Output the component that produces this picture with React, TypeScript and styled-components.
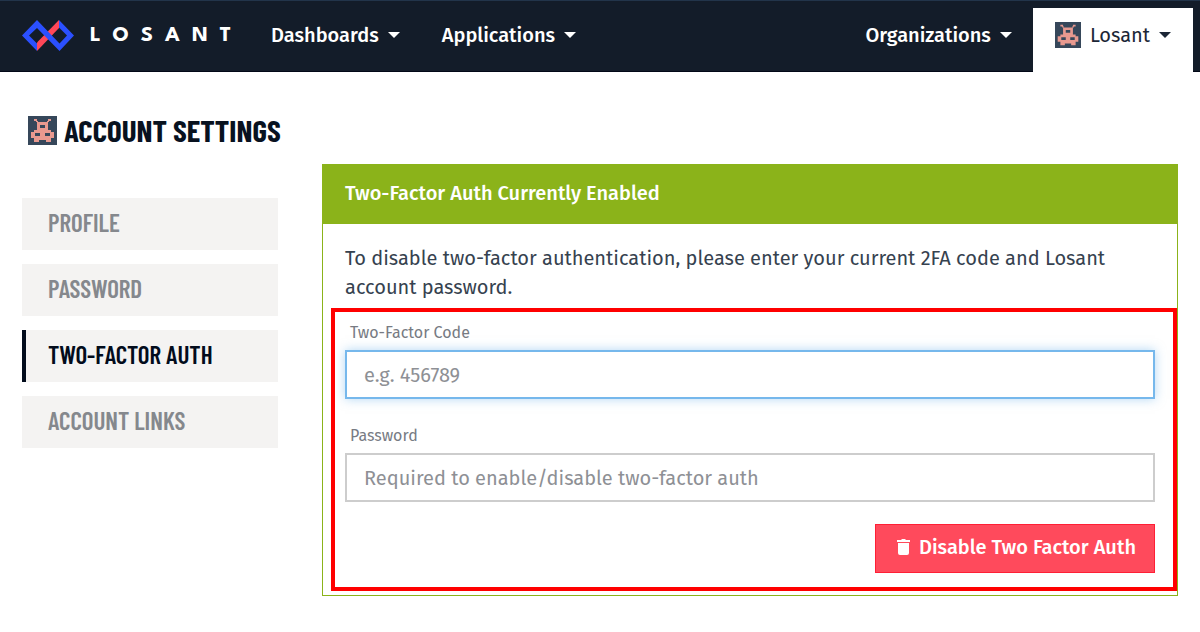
import React from "react";
import styled, { createGlobalStyle } from "styled-components";

const body = `"Fira Sans", "Noto Sans", sans-serif`;
const narrow = `"Barlow Condensed", "Roboto Condensed", "Liberation Sans", sans-serif`;

const Global = createGlobalStyle`
  * { box-sizing: border-box; }
  body { margin: 0; background: #fff; color: #36424f; font: 20px/28px ${body}; }
`;

const Header = styled.header`
  display: flex;
  align-items: stretch;
  height: 72px;
  padding: 0 7px 0 22px;
  background: #131c29;
  border-top: 1px solid #22344a;
  border-bottom: 1px solid #020817;
`;
const Brand = styled.a`
  display: flex;
  align-items: center;
  gap: 16px;
  margin-right: 28px;
  padding-bottom: 2px;
  color: #fff;
  text-decoration: none;
`;
const Wordmark = styled.span`
  padding-top: 2px;
  font: 700 22px/24px "League Spartan", Lato, sans-serif;
  letter-spacing: 12px;
`;
const Nav = styled.nav`
  display: flex;
  flex: 1;
  gap: 42px;
`;
const NavButton = styled.button<{ $end?: boolean }>`
  display: flex;
  align-items: center;
  gap: 9px;
  margin-left: ${(p) => (p.$end ? "auto" : "0")};
  padding: 0 0 2px;
  border: 0;
  background: none;
  color: #fff;
  font: 500 20px/28px ${body};
`;
const Tab = styled(NavButton)`
  margin: 7px 0 -1px 21px;
  padding: 0 22px 10px;
  background: #fff;
  color: #1b2636;
  font-weight: 400;
`;
const Caret = styled.i`
  border: 6px solid transparent;
  border-top-color: currentColor;
  border-bottom: 0;
`;

const Title = styled.h1`
  display: flex;
  align-items: center;
  gap: 7px;
  margin: 0;
  padding: 42px 28px 17px;
  color: #08121f;
  font: 700 31px/33px ${narrow};
`;
const TitleText = styled.span`
  padding-bottom: 2px;
  line-height: 31px;
`;
const Columns = styled.div`
  display: flex;
  align-items: flex-start;
`;
const Side = styled.nav`
  display: flex;
  flex: 0 0 25%;
  flex-direction: column;
  gap: 14px;
  padding: 34px 22px 0;
`;
const SideLink = styled.a<{ $active?: boolean }>`
  padding: 10px 20px 14px 22px;
  border-left: 4px solid ${(p) => (p.$active ? "#020c1c" : "#f4f3f2")};
  background: #f4f3f2;
  color: ${(p) => (p.$active ? "#020c1c" : "#85888d")};
  font: 600 25px/28px ${narrow};
  text-decoration: none;
`;
const Main = styled.main`
  flex: 1;
  padding: 0 22px;
`;
const Panel = styled.section`
  border: 1px solid #8bb31a;
`;
const PanelHead = styled.h2`
  margin: 0;
  padding: 14px 22px 17px;
  background: #8bb31a;
  color: #fff;
  font: 500 20px/28px ${body};
`;
const PanelBody = styled.div`
  padding: 20px 22px 22px;
`;
const Text = styled.p`
  margin: 0 0 16px;
  font-size: 20px;
  line-height: 29px;
`;
const Form = styled.form`
  position: relative;
  display: flex;
  flex-direction: column;
`;
const Highlight = styled.div`
  position: absolute;
  inset: -10px -22px -18px -14px;
  border: 4px solid #f00;
  pointer-events: none;
`;
const Label = styled.label`
  padding: 3px 5px 5px;
  color: #777b83;
  font: 400 16px/24px ${body};
`;
const Input = styled.input<{ $focused?: boolean }>`
  width: 100%;
  height: 49px;
  margin-bottom: 22px;
  padding: 0 17px;
  border: 2px solid ${(p) => (p.$focused ? "#76b8ec" : "#cdcdcd")};
  border-radius: 0;
  outline: 0;
  background: #fff;
  box-shadow: ${(p) => (p.$focused ? "0 0 10px rgba(102, 175, 233, 0.5)" : "none")};
  color: #36424f;
  font: 20px/28px ${body};
  &::placeholder { color: #8e9095; opacity: 1; }
`;
const Danger = styled.button`
  display: flex;
  align-items: center;
  align-self: flex-end;
  gap: 9px;
  height: 49px;
  padding: 0 18px 3px 21px;
  border: 1px solid #ff1f35;
  background: #ff4a5c;
  color: #fff;
  font: 500 20px/28px ${body};
`;

const Logo = () => (
  <svg width="52" height="31" viewBox="0 0 52 31" aria-hidden="true">
    <path d="M15 22.500 37 0v8L15 31z" fill="#ff4758" />
    <path
      fillRule="evenodd"
      fill="#2b50ff"
      d="M0 15.500 15 0 37.500 23.500 45 15.500 37 7.500V0L52 15.500 37.500 31 15 8 7 15.500 15 23.500V31z"
    />
  </svg>
);

const Avatar = ({ size }: { size: number }) => (
  <svg width={size} height={size} viewBox="0 0 29 29" aria-hidden="true">
    <path d="M0 0h29v29H0z" fill="#36475a" />
    <path
      fill="#e8998f"
      d="M6 3h3v2H6zM20 3h3v2h-3zM8 5h2v1H8zM19 5h2v1h-2z"
    />
    <path
      fillRule="evenodd"
      fill="#e8998f"
      d="M9 6h11v8h3v2h3v6h-3v4h-5v-2h-7v2H6v-4H3v-6h3v-2h3zM12 9v3h5V9zM7 17v3h5v-3zM17 17v3h5v-3z"
    />
  </svg>
);

const Trash = () => (
  <svg width="13" height="16" viewBox="0 0 13 16" fill="currentColor" aria-hidden="true">
    <path d="M0 1h4l1-1h3l1 1h4v2H0zM1 4h11v10a2 2 0 0 1-2 2H3a2 2 0 0 1-2-2z" />
  </svg>
);

const links = ["PROFILE", "PASSWORD", "TWO-FACTOR AUTH", "ACCOUNT LINKS"];

export default function App() {
  return (
    <>
      <Global />
      <Header>
        <Brand href="#">
          <Logo />
          <Wordmark>LOSANT</Wordmark>
        </Brand>
        <Nav>
          <NavButton>Dashboards<Caret /></NavButton>
          <NavButton>Applications<Caret /></NavButton>
          <NavButton $end>Organizations<Caret /></NavButton>
        </Nav>
        <Tab><Avatar size={26} />Losant<Caret /></Tab>
      </Header>
      <Title><Avatar size={29} /><TitleText>ACCOUNT SETTINGS</TitleText></Title>
      <Columns>
        <Side>
          {links.map((name, i) => (
            <SideLink key={name} href="#" $active={i === 2}>{name}</SideLink>
          ))}
        </Side>
        <Main>
          <Panel>
            <PanelHead>Two-Factor Auth Currently Enabled</PanelHead>
            <PanelBody>
              <Text>
                To disable two-factor authentication, please enter your current 2FA code and Losant
                account password.
              </Text>
              <Form>
                <Label htmlFor="code">Two-Factor Code</Label>
                <Input id="code" placeholder="e.g. 456789" $focused />
                <Label htmlFor="password">Password</Label>
                <Input
                  id="password"
                  type="password"
                  placeholder="Required to enable/disable two-factor auth"
                />
                <Danger type="button"><Trash />Disable Two Factor Auth</Danger>
                <Highlight />
              </Form>
            </PanelBody>
          </Panel>
        </Main>
      </Columns>
    </>
  );
}
